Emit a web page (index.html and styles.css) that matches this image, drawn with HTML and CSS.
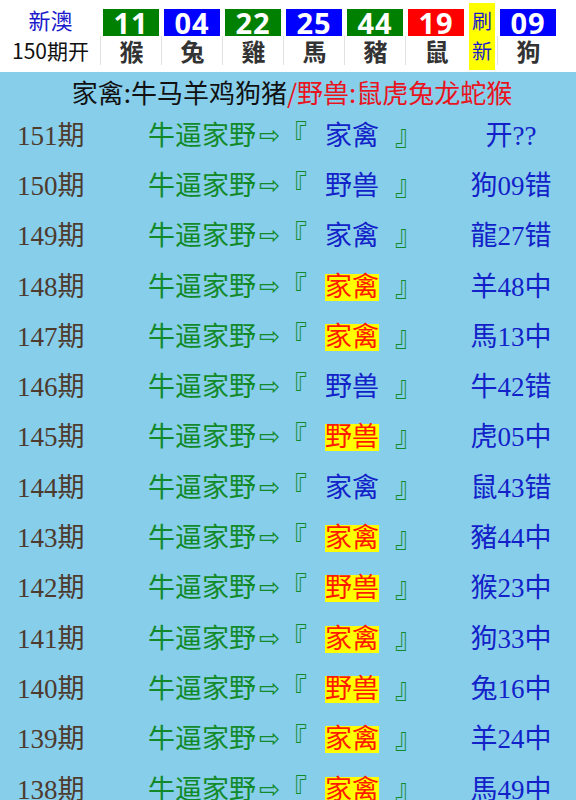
FILE: index.html
```html
<!DOCTYPE html>
<html lang="zh">

<head>
    <meta charset="UTF-8">
    <meta name="viewport" content="width=device-width, initial-scale=1.0">
    <title>新澳 家禽野兽</title>
    <link rel="stylesheet" href="styles.css">
</head>

<body>

    <div class="top">
        <div class="qi">
            <p class="xa">新澳</p>
            <p>150期开</p>
        </div>
        <div class="ball"><p class="num g">11</p><p class="sx">猴</p></div>
        <div class="ball"><p class="num b">04</p><p class="sx">兔</p></div>
        <div class="ball"><p class="num g">22</p><p class="sx">雞</p></div>
        <div class="ball"><p class="num b">25</p><p class="sx">馬</p></div>
        <div class="ball"><p class="num g">44</p><p class="sx">豬</p></div>
        <div class="ball"><p class="num r">19</p><p class="sx">鼠</p></div>
        <div class="shua">刷<br>新</div>
        <div class="ball"><p class="num b">09</p><p class="sx">狗</p></div>
    </div>

    <div class="main">
        <h2><span>家禽:牛马羊鸡狗猪</span><em>/野兽:鼠虎兔龙蛇猴</em></h2>

        <div class="list">
            <div class="row"><span class="qh">151期</span><span class="tj">牛逼家野<i>⇨</i>『<b>家禽</b>』</span><span class="kj">开??</span></div>
            <div class="row"><span class="qh">150期</span><span class="tj">牛逼家野<i>⇨</i>『<b>野兽</b>』</span><span class="kj">狗09错</span></div>
            <div class="row"><span class="qh">149期</span><span class="tj">牛逼家野<i>⇨</i>『<b>家禽</b>』</span><span class="kj">龍27错</span></div>
            <div class="row"><span class="qh">148期</span><span class="tj">牛逼家野<i>⇨</i>『<b class="zhong">家禽</b>』</span><span class="kj">羊48中</span></div>
            <div class="row"><span class="qh">147期</span><span class="tj">牛逼家野<i>⇨</i>『<b class="zhong">家禽</b>』</span><span class="kj">馬13中</span></div>
            <div class="row"><span class="qh">146期</span><span class="tj">牛逼家野<i>⇨</i>『<b>野兽</b>』</span><span class="kj">牛42错</span></div>
            <div class="row"><span class="qh">145期</span><span class="tj">牛逼家野<i>⇨</i>『<b class="zhong">野兽</b>』</span><span class="kj">虎05中</span></div>
            <div class="row"><span class="qh">144期</span><span class="tj">牛逼家野<i>⇨</i>『<b>家禽</b>』</span><span class="kj">鼠43错</span></div>
            <div class="row"><span class="qh">143期</span><span class="tj">牛逼家野<i>⇨</i>『<b class="zhong">家禽</b>』</span><span class="kj">豬44中</span></div>
            <div class="row"><span class="qh">142期</span><span class="tj">牛逼家野<i>⇨</i>『<b class="zhong">野兽</b>』</span><span class="kj">猴23中</span></div>
            <div class="row"><span class="qh">141期</span><span class="tj">牛逼家野<i>⇨</i>『<b class="zhong">家禽</b>』</span><span class="kj">狗33中</span></div>
            <div class="row"><span class="qh">140期</span><span class="tj">牛逼家野<i>⇨</i>『<b class="zhong">野兽</b>』</span><span class="kj">兔16中</span></div>
            <div class="row"><span class="qh">139期</span><span class="tj">牛逼家野<i>⇨</i>『<b class="zhong">家禽</b>』</span><span class="kj">羊24中</span></div>
            <div class="row"><span class="qh">138期</span><span class="tj">牛逼家野<i>⇨</i>『<b class="zhong">家禽</b>』</span><span class="kj">馬49中</span></div>
        </div>
    </div>

</body>

</html>
```

FILE: styles.css
```css
body {
    margin: 0;
    background: #87ceeb;
    font-family: "Noto Sans CJK SC", sans-serif;
}

p {
    margin: 0;
}

.top {
    background: white;
    height: 72px;
    display: flex;
    gap: 5px;
    padding-top: 3px;
    box-sizing: border-box;
}

.qi {
    width: 101px;
    text-align: center;
    font-size: 21px;
    line-height: 31px;
    color: #111;
    margin-right: -3px;
}

.qi .xa {
    color: #1a1acc;
    margin-top: 1px;
    font-size: 22px;
}

.ball {
    width: 56px;
    display: flex;
    flex-direction: column;
    padding-top: 6px;
}

.num {
    height: 27px;
    line-height: 27px;
    color: white;
    text-align: center;
    font-family: "Noto Sans", sans-serif;
    font-weight: bold;
    font-size: 29px;
    letter-spacing: 1px;
}

.g {
    background: #008000;
}

.b {
    background: #0000ff;
}

.r {
    background: #ff0000;
}

.sx {
    margin-left: -3px;
    padding-left: 3px;
    border-left: 1px solid #e2e2e2;
    height: 29px;
    line-height: 30px;
    text-align: center;
    font-size: 24px;
    font-weight: bold;
    color: #333;
}

.shua {
    width: 26px;
    height: 67px;
    background: #ffff00;
    color: #1a1acc;
    font-size: 20px;
    line-height: 30px;
    text-align: center;
    padding-top: 3px;
    box-sizing: border-box;
}

.main h2 {
    margin: 0;
    height: 36px;
    font-size: 26px;
    font-weight: normal;
    line-height: 40px;
    text-align: center;
    color: #111;
    padding-left: 8px;
}

.main h2 em {
    font-style: normal;
    color: #e8141e;
}

.row {
    height: 50.3px;
    display: grid;
    grid-template-columns: 148px 300px 1fr;
    align-items: center;
    font-family: "Liberation Serif", "Noto Sans CJK SC", serif;
    font-size: 27px;
}

.qh {
    padding-left: 17px;
    color: #4d3b2e;
}

.tj {
    color: #128a2a;
    white-space: nowrap;
}

.tj i {
    font-style: normal;
    font-family: "DejaVu Sans", sans-serif;
    font-size: 25px;
    margin-left: 3px;
    vertical-align: 1px;
}

.tj b {
    display: inline-block;
    font-weight: normal;
    line-height: 27px;
    height: 27px;
    color: #1222c8;
    margin: 0 16px 0 18px;
}

.tj b.zhong {
    color: #ff1a00;
    background: #ffff00;
}

.kj {
    text-align: center;
    color: #1222c8;
    padding-right: 2px;
}
```
